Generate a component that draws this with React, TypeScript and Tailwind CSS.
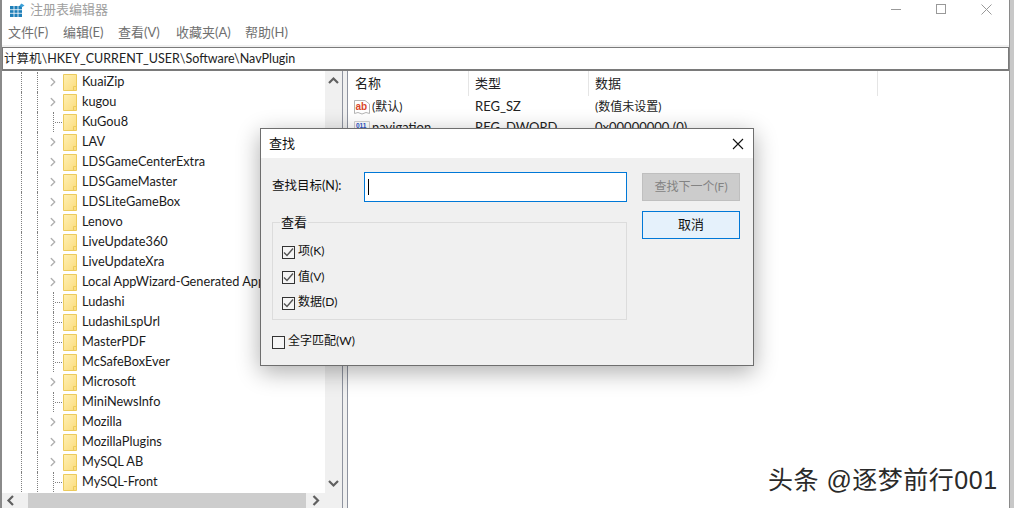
import { ChevronRight } from "lucide-react";

const treeItems = [
  { name: "KuaiZip", open: true },
  { name: "kugou", open: true },
  { name: "KuGou8", open: false },
  { name: "LAV", open: true },
  { name: "LDSGameCenterExtra", open: true },
  { name: "LDSGameMaster", open: true },
  { name: "LDSLiteGameBox", open: true },
  { name: "Lenovo", open: true },
  { name: "LiveUpdate360", open: true },
  { name: "LiveUpdateXra", open: true },
  { name: "Local AppWizard-Generated Applications", open: true },
  { name: "Ludashi", open: false },
  { name: "LudashiLspUrl", open: false },
  { name: "MasterPDF", open: false },
  { name: "McSafeBoxEver", open: false },
  { name: "Microsoft", open: true },
  { name: "MiniNewsInfo", open: false },
  { name: "Mozilla", open: true },
  { name: "MozillaPlugins", open: true },
  { name: "MySQL AB", open: true },
  { name: "MySQL-Front", open: false },
];

const menus = ["文件(F)", "编辑(E)", "查看(V)", "收藏夹(A)", "帮助(H)"];
const menuWidths = ["w-[55px]", "w-[55px]", "w-[58px]", "w-[69px]", "w-auto"];

const Folder = () => (
  <svg width="14" height="17" viewBox="0 0 14 17" className="shrink-0">
    <defs>
      <linearGradient id="folderFill" x1="0" y1="0" x2="1" y2="1">
        <stop offset="0" stopColor="#fff0b4" />
        <stop offset="1" stopColor="#fbdc7c" />
      </linearGradient>
    </defs>
    <path d="M0.5 0.5H13.5V16.5H0.5Z" fill="url(#folderFill)" stroke="#eccb5c" />
    <path d="M10.5 16V12.5H13" fill="none" stroke="#eccb5c" />
  </svg>
);

const Arrow = ({ dir }: { dir: "up" | "down" | "left" | "right" }) => {
  const d = {
    up: "M1 7L5.5 2.5L10 7",
    down: "M1 2L5.5 6.5L10 2",
    left: "M7 1L2.5 5.5L7 10",
    right: "M2.5 1L7 5.5L2.5 10",
  }[dir];
  return (
    <svg width="11" height="11" viewBox="0 0 11 11" fill="none" stroke="#606060" strokeWidth="2.2">
      <path d={d} />
    </svg>
  );
};

const TreeRow = ({ name, open }: { name: string; open: boolean }) => (
  <div className="flex h-5 items-center pl-[19px] whitespace-nowrap">
    <span className="h-5 w-4 shrink-0 border-l border-dotted border-[#808080]" />
    <span className="h-5 w-4 shrink-0 border-l border-dotted border-[#808080]" />
    {open ? (
      <span className="flex h-5 w-[10px] shrink-0 -translate-x-[7px] items-center">
        <ChevronRight size={14} strokeWidth={2.4} color="#b0b0b0" className="shrink-0" />
      </span>
    ) : (
      <span className="flex h-5 w-[10px] shrink-0 items-center border-l border-dotted border-[#808080]">
        <span className="ml-px w-[7px] border-t border-dotted border-[#808080]" />
      </span>
    )}
    <Folder />
    <span className="ml-[5px] text-[12.75px] text-[#1a1a1a]">{name}</span>
  </div>
);

const Check = ({ checked, label }: { checked: boolean; label: string }) => (
  <div className="flex h-[14px] items-center gap-[3px] text-xs leading-none text-[#111]">
    <span className="flex h-[13px] w-[13px] shrink-0 items-center justify-center border border-[#333] bg-[#f5f5f5]">
      {checked && (
        <svg width="11" height="11" viewBox="0 0 11 11" fill="none" stroke="#555" strokeWidth="1.4">
          <path d="M1 5.5L4 8.5L10 1.5" />
        </svg>
      )}
    </span>
    <span className="-translate-y-px">{label}</span>
  </div>
);

const FindDialog = () => (
  <div className="absolute top-[128px] left-[260px] flex h-[238px] w-[494px] flex-col border border-[#6e6e6e] bg-[#f0f0f0] shadow-[0_6px_22px_rgba(0,0,0,0.32)]">
    <div className="flex h-[29px] shrink-0 items-center justify-between bg-white pr-[9px] pl-2 text-[13px] text-[#111]">
      <span>查找</span>
      <svg width="12" height="12" viewBox="0 0 12 12" stroke="#111" strokeWidth="1.1">
        <path d="M1 1L11 11M11 1L1 11" />
      </svg>
    </div>
    <div className="flex flex-1 pt-[14px] pl-[11px]">
      <div className="w-[355px]">
        <div className="flex h-[30px] items-center">
          <span className="w-[92px] -translate-y-px text-[12.5px] text-[#111]">查找目标(N):</span>
          <div className="flex h-[30px] flex-1 items-center border border-[#0078d7] bg-white pl-[3px]">
            <span className="h-4 w-px bg-black" />
          </div>
        </div>
        <div className="relative mt-5 flex h-[98px] flex-col gap-[11.5px] border border-[#dcdcdc] pt-[22px] pl-[9px]">
          <span className="absolute -top-[9px] left-[7px] bg-[#f0f0f0] px-[1px] text-[13px] leading-4 text-[#111]">查看</span>
          <Check checked label="项(K)" />
          <Check checked label="值(V)" />
          <Check checked label="数据(D)" />
        </div>
        <div className="mt-[15px]">
          <Check checked={false} label="全字匹配(W)" />
        </div>
      </div>
      <div className="ml-[15px] flex w-[98px] flex-col gap-[10px] pt-px text-[13px]">
        <button className="h-[28px] border border-[#bfbfbf] bg-[#cccccc] text-xs text-[#838383]">查找下一个(F)</button>
        <button className="h-[28px] border border-[#0078d7] bg-[#e5f1fb] text-[#111]">取消</button>
      </div>
    </div>
  </div>
);

const App = () => (
  <div className="relative flex h-[508px] w-[1014px] overflow-hidden bg-white font-['Lato','Noto_Sans_CJK_SC',sans-serif] text-[13px]">
    {/* Window */}
    <div className="flex h-full w-[1010px] shrink-0 flex-col border-r border-l-2 border-[#8a8a8a] bg-white">
      {/* Title bar */}
      <div className="flex h-[20px] shrink-0 items-center pl-[7px] text-[13px] text-[#a0a0a0]">
        <svg width="16" height="15" viewBox="0 0 16 15" className="shrink-0">
          <path d="M1 3H13V14H1Z" fill="#1e7fb8" />
          <path d="M5 3V14M9 3V14M1 6.7H13M1 10.3H13" stroke="#fff" strokeWidth="0.8" />
          <path d="M12.5 0.5L15.5 2.5L12.5 4.5L10.5 2.5Z" fill="#3ba0d8" />
        </svg>
        <span className="ml-[5px]">注册表编辑器</span>
        <div className="ml-auto flex items-center pr-[17px] pb-[2px]">
          <span className="w-[10px] border-t border-[#999]" />
          <span className="ml-[35px] h-[10px] w-[10px] border border-[#999]" />
          <svg width="11" height="11" viewBox="0 0 11 11" stroke="#999" className="ml-[35px]">
            <path d="M0.5 0.5L10.5 10.5M10.5 0.5L0.5 10.5" />
          </svg>
        </div>
      </div>

      {/* Menu */}
      <div className="flex h-[25px] shrink-0 items-center pl-[6px] text-[#707070]">
        {menus.map((m, i) => (
          <span key={m} className={menuWidths[i]}>
            {m}
          </span>
        ))}
      </div>
      <div className="h-[2px] shrink-0 bg-[#f0f0f0]" />

      {/* Address bar */}
      <div className="flex h-[24px] shrink-0 items-center border border-b-2 border-[#7a7a7a] pt-px pl-[1px] text-[12.5px] text-[#222]">
        计算机\HKEY_CURRENT_USER\Software\NavPlugin
      </div>

      {/* Panes */}
      <div className="flex min-h-0 flex-1">
        <div className="flex w-[340px] shrink-0 flex-col">
          <div className="flex min-h-0 flex-1">
            <div className="min-w-0 flex-1 overflow-hidden pt-px">
              {treeItems.map((item) => (
                <TreeRow key={item.name} name={item.name} open={item.open} />
              ))}
            </div>
            <div className="flex w-[17px] shrink-0 flex-col items-center justify-between bg-[#f0f0f0] pt-[5px] pb-[3px]">
              <Arrow dir="up" />
              <Arrow dir="down" />
            </div>
          </div>
          <div className="flex h-[15px] shrink-0 items-center bg-[#f0f0f0]">
            <span className="flex w-[26px] pl-[4px]">
              <Arrow dir="left" />
            </span>
            <span className="h-full w-[278px] bg-[#cdcdcd]" />
            <span className="flex w-[20px] justify-center">
              <Arrow dir="right" />
            </span>
          </div>
        </div>

        <div className="w-[6px] shrink-0 border-x border-[#8f94a0] bg-[#f0f0f0]" />

        <div className="min-w-0 flex-1">
          <div className="flex h-[25px] items-center text-[#222]">
            <span className="h-full w-[121px] border-r border-[#e5e5e5] pt-[3px] pl-[7px]">名称</span>
            <span className="h-full w-[120px] border-r border-[#e5e5e5] pt-[3px] pl-[6px]">类型</span>
            <span className="h-full w-[289px] border-r border-[#e5e5e5] pt-[3px] pl-[6px]">数据</span>
          </div>
          <div className="flex h-[21px] items-center text-[#222]">
            <span className="flex w-[121px] items-center pl-[6px]">
              <svg width="16" height="16" viewBox="0 0 16 16" className="shrink-0">
                <path d="M0.5 1.5H11L15.5 5V14.5L12 13.5L8 15L4 13.5L0.5 14.5Z" fill="#fff" stroke="#b5b5b5" />
                <text x="1.5" y="11" fontSize="10" fontWeight="700" fill="#d9472b" fontFamily="Liberation Sans">
                  ab
                </text>
              </svg>
              <span className="ml-[2px] text-xs">(默认)</span>
            </span>
            <span className="w-[120px] pl-[6px]">REG_SZ</span>
            <span className="pl-[6px] text-xs">(数值未设置)</span>
          </div>
          <div className="flex h-[21px] items-center text-[#222]">
            <span className="flex w-[121px] items-center pl-[6px]">
              <svg width="16" height="16" viewBox="0 0 16 16" className="shrink-0">
                <path d="M0.5 1.5H15.5V14.5H0.5Z" fill="#fff" stroke="#d0d0d0" />
                <text x="2" y="7.5" fontSize="6.5" fontWeight="700" fill="#2b55c8" fontFamily="Liberation Sans">
                  011
                </text>
                <text x="2" y="14" fontSize="6.5" fontWeight="700" fill="#2b55c8" fontFamily="Liberation Sans">
                  110
                </text>
              </svg>
              <span className="ml-[2px]">navigation</span>
            </span>
            <span className="w-[120px] pl-[6px]">REG_DWORD</span>
            <span className="pl-[6px]">0x00000000 (0)</span>
          </div>
        </div>
      </div>
    </div>

    {/* Edge of whatever sits behind the window */}
    <div className="h-full flex-1 bg-[#c8c8c8]" />

    <FindDialog />

    {/* Watermark */}
    <div className="absolute top-[464px] left-[768px] font-['Liberation_Sans','Noto_Sans_CJK_SC',sans-serif] text-[25px] leading-8 tracking-[0.5px] whitespace-nowrap text-[#2a2a2a] [text-shadow:1px_1px_0_#fff,-1px_-1px_0_#fff]">
      头条 @逐梦前行001
    </div>
  </div>
);

export default App;
